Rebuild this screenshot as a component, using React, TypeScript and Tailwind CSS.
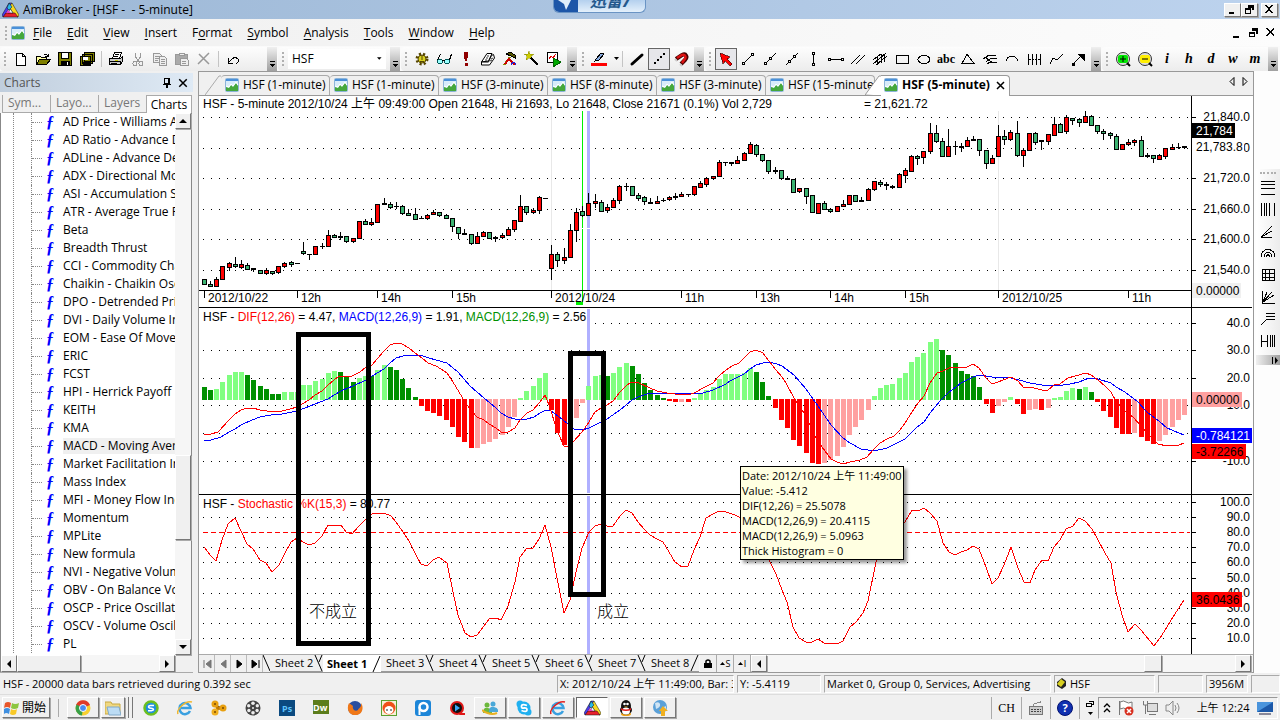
import type { ReactNode } from 'react';

// high, body top, body bottom, low, direction (1 = up, 0 = down)
type Candle = [number, number, number, number, number];

const CANDLES: Candle[] = [
  [279, 279, 285, 285, 0], [281, 284, 287, 287, 0], [277, 279, 287, 287, 1], [266, 266, 280, 280, 1], [262, 263, 268, 271, 1],
  [257, 264, 267, 268, 0], [260, 264, 268, 269, 1], [263, 265, 270, 270, 0], [268, 268, 270, 272, 0], [270, 270, 274, 274, 0],
  [268, 270, 274, 275, 1], [271, 271, 274, 275, 0], [266, 266, 273, 274, 1], [262, 263, 267, 268, 1], [261, 262, 265, 267, 0],
  [263, 263, 264, 264, 0], [242, 251, 254, 255, 0], [254, 254, 255, 260, 0], [246, 246, 255, 255, 1], [243, 246, 247, 249, 0],
  [230, 235, 247, 247, 1], [234, 235, 238, 238, 0], [232, 236, 238, 240, 0], [236, 236, 242, 243, 0], [238, 238, 242, 243, 1],
  [221, 221, 239, 239, 1], [219, 221, 225, 225, 0], [218, 222, 225, 226, 1], [204, 204, 223, 223, 1], [198, 203, 205, 205, 0],
  [202, 204, 208, 209, 0], [202, 206, 207, 209, 0], [205, 206, 214, 215, 0], [209, 213, 216, 216, 0], [208, 214, 220, 220, 0],
  [216, 218, 219, 219, 0], [214, 215, 219, 220, 1], [210, 212, 215, 215, 1], [212, 212, 216, 217, 0], [214, 215, 219, 219, 0],
  [218, 218, 227, 232, 0], [227, 227, 234, 239, 0], [229, 233, 235, 235, 0], [234, 234, 244, 245, 0], [232, 236, 244, 244, 1],
  [231, 232, 237, 237, 1], [232, 232, 239, 239, 0], [236, 237, 239, 242, 0], [233, 235, 238, 239, 1], [227, 229, 236, 236, 1],
  [220, 220, 230, 232, 1], [195, 206, 222, 222, 1], [206, 206, 213, 215, 0], [208, 210, 213, 214, 1], [196, 197, 211, 214, 1],
  [198, 198, 199, 199, 0], [245, 254, 269, 280, 1], [252, 254, 261, 267, 0], [248, 257, 261, 264, 1], [224, 230, 258, 258, 1],
  [208, 212, 231, 242, 1], [206, 211, 216, 217, 0], [193, 203, 216, 216, 1], [194, 201, 204, 208, 1], [200, 202, 212, 212, 0],
  [204, 207, 211, 213, 1], [198, 200, 208, 208, 1], [185, 186, 201, 204, 1], [183, 186, 187, 191, 0], [186, 186, 196, 196, 0],
  [193, 195, 199, 201, 0], [196, 197, 202, 205, 0], [198, 202, 204, 204, 0], [196, 201, 204, 204, 1], [198, 200, 201, 202, 0],
  [196, 197, 200, 201, 1], [193, 196, 198, 200, 1], [192, 194, 197, 197, 1], [194, 194, 195, 197, 0], [186, 186, 195, 196, 1],
  [181, 183, 188, 188, 1], [177, 178, 185, 187, 1], [176, 176, 179, 180, 1], [160, 162, 177, 177, 1], [162, 162, 163, 166, 0],
  [162, 162, 164, 166, 0], [156, 160, 164, 164, 1], [152, 153, 161, 161, 1], [142, 144, 154, 154, 1], [144, 145, 155, 157, 0],
  [154, 154, 161, 162, 0], [160, 160, 172, 174, 0], [167, 170, 172, 174, 0], [170, 170, 179, 180, 0], [176, 178, 180, 180, 0],
  [179, 179, 193, 193, 0], [188, 188, 192, 193, 1], [188, 188, 197, 204, 0], [195, 195, 213, 213, 0], [203, 203, 214, 214, 1],
  [201, 203, 210, 210, 0], [208, 209, 212, 213, 0], [206, 206, 212, 212, 1], [200, 204, 207, 207, 1], [195, 195, 205, 205, 1],
  [195, 195, 202, 202, 0], [197, 200, 202, 202, 0], [188, 189, 201, 201, 1], [181, 181, 190, 191, 1], [180, 182, 185, 187, 0],
  [182, 184, 186, 190, 0], [185, 186, 188, 189, 0], [173, 174, 188, 188, 1], [168, 170, 176, 183, 1], [155, 156, 172, 172, 1],
  [155, 156, 159, 165, 0], [151, 151, 158, 164, 1], [123, 133, 152, 154, 1], [125, 133, 142, 143, 0], [138, 141, 157, 157, 0],
  [129, 146, 157, 157, 1], [141, 146, 147, 155, 0], [143, 146, 148, 152, 0], [137, 140, 147, 147, 1], [136, 139, 141, 141, 0],
  [139, 139, 151, 156, 0], [150, 150, 164, 169, 0], [155, 158, 164, 164, 1], [125, 136, 157, 157, 1], [130, 136, 140, 145, 0],
  [130, 132, 140, 141, 1], [121, 133, 156, 157, 0], [148, 150, 156, 167, 1], [133, 133, 151, 151, 1], [132, 133, 143, 145, 0],
  [140, 140, 142, 150, 0], [134, 134, 142, 145, 1], [117, 124, 136, 136, 1], [123, 124, 133, 133, 0], [115, 117, 132, 134, 1],
  [118, 118, 121, 125, 0], [118, 119, 123, 127, 0], [111, 116, 123, 123, 1], [115, 116, 126, 126, 0], [125, 125, 132, 134, 0],
  [129, 131, 134, 140, 0], [132, 133, 136, 139, 0], [134, 136, 150, 150, 0], [144, 144, 150, 150, 1], [139, 142, 145, 146, 1],
  [139, 140, 143, 146, 1], [136, 140, 157, 157, 0], [153, 155, 157, 158, 0], [155, 155, 159, 163, 0], [154, 155, 160, 160, 1],
  [148, 148, 157, 159, 1], [144, 147, 150, 150, 1], [143, 147, 148, 149, 0], [146, 146, 148, 149, 0],
];

const HISTOGRAM = [
  387, 390, 389, 382, 375, 372, 372, 375, 380, 386, 389, 394, 394, 392, 392, 392, 385, 385, 381, 379,
  373, 371, 372, 376, 382, 378, 376, 376, 370, 365, 367, 370, 379, 388, 397, 406, 411, 413, 416, 420,
  427, 437, 442, 448, 448, 444, 442, 439, 435, 427, 417, 398, 391, 386, 378, 373, 410, 433, 445, 432,
  418, 403, 386, 376, 375, 376, 373, 367, 363, 366, 374, 383, 390, 395, 398, 401, 402, 402, 402, 398,
  393, 390, 387, 379, 374, 374, 374, 373, 368, 372, 382, 396, 408, 420, 428, 440, 446, 453, 463, 464,
  463, 460, 456, 447, 435, 427, 420, 410, 396, 388, 385, 384, 378, 373, 362, 357, 353, 342, 339, 350,
  355, 363, 371, 374, 376, 387, 404, 413, 406, 402, 397, 404, 414, 410, 409, 410, 408, 398, 397, 391,
  388, 389, 387, 392, 402, 411, 417, 428, 434, 434, 433, 437, 441, 444, 441, 435, 427, 420, 415,
];

// D/L = falling/rising above zero, R/P = falling/rising below zero
const SHADES =
  'DDLLLLLDDDDDDLLLLLLLLLDDDLLDLLDDDDDRRRRRRRRRPPPPPPPLLLLLRRRPPPLLLDLLLDDDDDDRRPRLLLLLLLLLLDDDRRRRRRRR' +
  'PPPPPPPPLLLLLLLLLLLDDDDDDDRRPPLRRPPRPLLLLDLDRRRRRRPRRRPPPPP';

const SHADE_COLORS: Record<string, string> = { D: '#009000', L: '#80ff80', R: '#ff0000', P: '#ffa0a0' };

const DIF =
  '204,434 211,434 218,432 229,420 235,414 241,410 247,408 253,408 260,410 267,411 273,412 282,411 290,409 297,407 302,404 309,400 315,395 322,391 328,385 339,376 352,376 360,372 366,367 372,365 378,358 384,351 390,345 396,343 402,344 409,348 415,353 422,358 428,363 436,366 441,369 447,373 453,382 459,392 465,402 470,409 477,417 484,420 489,424 496,428 501,432 508,432 515,428 520,420 527,413 533,410 540,402 545,395 549,405 558,433 564,446 569,446 573,442 582,432 589,422 595,412 601,408 607,405 613,401 620,392 627,385 632,382 639,383 650,388 657,391 667,393 675,394 689,395 696,392 703,388 713,383 719,376 726,370 732,366 739,363 744,358 750,352 756,350 763,353 769,361 776,370 782,377 786,383 794,398 804,413 809,423 816,438 822,447 831,459 837,462 843,464 850,462 860,460 867,457 874,449 880,443 887,439 894,436 900,430 905,423 912,412 918,403 924,396 930,383 937,373 943,371 949,368 955,367 967,367 973,364 979,368 986,378 992,384 998,382 1011,377 1018,381 1024,388 1030,387 1042,390 1048,390 1054,385 1060,384 1068,378 1075,376 1086,373 1091,375 1098,380 1105,386 1111,392 1116,401 1125,411 1133,417 1141,426 1147,433 1153,439 1158,444 1167,446 1174,445 1179,445 1184,443';

const SIGNAL =
  '204,441 211,440 221,437 229,432 235,429 241,425 252,420 260,417 271,415 282,414 297,411 305,408 315,404 328,399 334,395 343,390 353,386 366,380 372,376 384,369 390,363 396,358 403,356 420,355 429,358 436,360 447,363 458,372 470,386 484,398 496,408 501,413 508,417 515,419 527,419 534,417 540,413 546,410 551,411 558,416 568,424 574,429 582,430 589,428 601,422 607,419 620,410 632,400 638,397 650,393 677,393 689,394 703,393 713,390 726,384 730,381 744,374 750,369 756,365 763,363 769,362 777,364 782,366 794,375 806,389 818,406 831,425 843,438 850,443 861,449 874,451 887,448 895,444 905,439 916,428 924,422 930,413 940,401 948,393 961,383 973,377 979,375 986,376 992,377 1011,378 1019,380 1030,383 1042,385 1056,386 1070,384 1079,382 1089,378 1098,379 1111,383 1116,387 1125,392 1137,401 1147,412 1160,422 1167,428 1179,433 1184,435';

const STOCHASTIC =
  '204,547 211,556 216,561 222,540 228,524 235,518 241,531 247,544 253,549 260,560 266,563 272,572 279,565 285,553 291,542 297,538 303,542 309,545 315,543 322,536 328,525 341,525 346,532 352,534 359,526 367,518 372,514 384,513 391,516 396,522 403,532 409,541 416,555 421,564 427,566 433,560 439,557 447,563 453,592 458,615 465,633 471,637 477,635 484,626 489,619 496,618 501,620 508,606 515,582 520,557 527,548 533,548 539,539 545,525 551,547 558,583 564,613 570,600 576,572 582,548 589,532 595,526 601,524 607,526 613,526 620,516 626,510 632,513 638,522 644,529 650,535 657,539 663,542 669,552 675,562 682,567 688,566 694,550 700,537 706,518 713,514 719,511 726,512 735,515 745,520 757,535 769,560 776,574 782,590 787,602 793,627 799,638 806,642 812,642 818,639 824,643 831,643 837,644 843,641 850,627 856,622 863,613 868,601 874,572 877,557 890,535 905,522 912,510 918,511 924,508 930,513 937,521 943,543 949,552 955,555 961,552 967,550 973,546 979,549 986,567 992,584 998,578 1004,565 1011,547 1018,568 1024,582 1030,583 1035,570 1042,560 1048,561 1054,547 1060,540 1066,529 1073,526 1079,518 1085,521 1092,529 1098,540 1105,553 1111,563 1116,592 1122,615 1128,632 1135,624 1141,630 1154,646 1160,638 1167,627 1173,617 1184,600';

const GRID_ROWS = [117, 148, 178, 209, 239, 270, 323, 350, 378, 405, 433, 461, 502, 517, 547, 562, 578, 593, 608, 623, 638];

const AXIS_LABELS: [number, string][] = [
  [117, '21,840.0'], [148, '21,780.0'], [178, '21,720.0'], [209, '21,660.0'], [239, '21,600.0'], [270, '21,540.0'],
  [323, '40.0'], [350, '30.0'], [378, '20.0'], [405, '10.0'], [461, '-10.0'],
  [502, '100.0'], [517, '90.0'], [532, '80.0'], [547, '70.0'], [562, '60.0'], [578, '50.0'], [593, '40.0'], [608, '30.0'], [623, '20.0'], [638, '10.0'],
];

const TIME_LABELS: [number, string][] = [
  [204, '2012/10/22'], [297, '12h'], [377, '14h'], [452, '15h'], [551, '2012/10/24'], [681, '11h'],
  [756, '13h'], [830, '14h'], [905, '15h'], [998, '2012/10/25'], [1128, '11h'],
];

const INDICATORS = [
  'AD Price - Williams Accumulation', 'AD Ratio - Advance Decline Ratio', 'ADLine - Advance Decline Line', 'ADX - Directional Movement', 'ASI - Accumulation Swing',
  'ATR - Average True Range', 'Beta', 'Breadth Thrust', 'CCI - Commodity Channel', 'Chaikin - Chaikin Oscillator',
  'DPO - Detrended Price', 'DVI - Daily Volume Index', 'EOM - Ease Of Movement', 'ERIC', 'FCST', 'HPI - Herrick Payoff Index',
  'KEITH', 'KMA', 'MACD - Moving Average', 'Market Facilitation Index', 'Mass Index', 'MFI - Money Flow Index', 'Momentum',
  'MPLite', 'New formula', 'NVI - Negative Volume', 'OBV - On Balance Volume', 'OSCP - Price Oscillator', 'OSCV - Volume Oscillator', 'PL',
];

const MENU = ['File', 'Edit', 'View', 'Insert', 'Format', 'Symbol', 'Analysis', 'Tools', 'Window', 'Help'];
const MENU_KEY: Record<string, number> = { Format: 1 };

const barX = (i: number) => Math.floor(204.2 + i * 6.205);

const raised = 'border border-white border-r-[#777] border-b-[#777] bg-[#f0f0f0] shadow-[1px_1px_0_#aaa]';
const track = 'bg-[#f6f6f6]';

function Icon({ children, size = 16 }: { children: ReactNode; size?: number }) {
  return (
    <svg width={size} height={size} viewBox="0 0 16 16" fill="none" stroke="#000" shapeRendering="crispEdges" className="shrink-0">
      {children}
    </svg>
  );
}

function Arrow({ dir }: { dir: 'up' | 'down' | 'left' | 'right' }) {
  const d = { up: 'M0 6h8L4 2z', down: 'M0 2h8L4 6z', left: 'M6 0v8L2 4z', right: 'M2 0v8l4-4z' }[dir];
  return (
    <svg width="8" height="8" viewBox="0 0 8 8">
      <path d={d} fill="#000" />
    </svg>
  );
}

function AmiLogo() {
  return (
    <svg width="17" height="16" viewBox="0 0 17 16" stroke="#111" strokeWidth="0.5" strokeLinejoin="round">
      <path d="M7 1h3L3.500 12 1 15 0 13z" fill="#4a3cf0" />
      <path d="M10 1l7 12-1 2-3-1-6-9z" fill="#f8d820" />
      <path d="M1 15l3-4h9l3 4z" fill="#e8202c" />
      <path d="M8.500 7l2.500 4H6z" fill="#e8ffff" />
      <path d="M7 1l3 4-3 3-2-2z" fill="#28b8e8" />
      <path d="M4 11l2-3 3 3z" fill="#e040c0" stroke="none" />
    </svg>
  );
}

function ChartIcon() {
  return (
    <svg width="14" height="14" viewBox="0 0 14 14" className="shrink-0">
      <rect x=".5" y=".5" width="13" height="13" rx="1" fill="#d8ecfa" stroke="#8db4d8" />
      <rect x="1" y="1" width="12" height="2" fill="#4a90d9" />
      <path d="M1 13V9l3 1 2-3 2 2 3-4 2 3v5z" fill="#45a83c" />
      <path d="M1 8l3 1 2-3 2 2 3-4 2 3" fill="none" stroke="#fff" />
    </svg>
  );
}

function Tool({ label, children, pressed = false }: { label: string; children: ReactNode; pressed?: boolean }) {
  return (
    <button
      type="button"
      aria-label={label}
      className={
        pressed
          ? 'flex h-[22px] w-[22px] items-center justify-center border border-[#666] bg-[#e6e6ea]'
          : 'flex h-[22px] w-[22px] items-center justify-center'
      }
    >
      {children}
    </button>
  );
}

function ToolGroup({ children, className = '' }: { children: ReactNode; className?: string }) {
  return (
    <div className={`flex h-6 items-center gap-[2px] rounded-sm bg-gradient-to-b from-[#fdfdfd] to-[#ececec] ${className}`}>
      <span className="ml-1 h-[14px] w-1 border-l-2 border-dotted border-[#b0b0b0]" />
      <div className="flex flex-1 items-center">{children}</div>
      <button type="button" aria-label="Toolbar options" className="flex h-6 w-[10px] flex-col items-center justify-end bg-gradient-to-b from-[#f0f0f0] to-[#a0a0a0] pb-1">
        <svg width="5" height="6" viewBox="0 0 5 6" shapeRendering="crispEdges">
          <path d="M0 0h5v1H0zM0 3h5L2.500 6z" fill="#000" />
        </svg>
      </button>
    </div>
  );
}

const Sep = () => <span className="mx-[3px] h-4 w-px bg-[#c4c4c4]" />;

function Toolbar() {
  return (
    <div className="flex h-[25px] items-center gap-px overflow-hidden bg-[#fafafa]">
      <ToolGroup className="w-[277px]">
        <Tool label="New"><Icon><path d="M3.500 2.500h6l3 3v9h-9zM9.500 2.500v3h3" fill="#fff" /></Icon></Tool>
        <Tool label="Open"><Icon><path d="M1.500 13.500v-8h4l1 1h5v3" fill="#ffffa0" /><path d="M1.500 13.500l3-5h11l-4 5z" fill="#808000" /><path d="M9 3.500h2l2 1m0-2v3h-3" /></Icon></Tool>
        <Tool label="Save"><Icon><rect x="1.500" y="1.500" width="13" height="13" fill="#808000" /><rect x="4.500" y="1.500" width="7" height="6" fill="#fff" /><rect x="4.500" y="10.500" width="8" height="4" fill="#000" /><path d="M10.500 11v3" stroke="#fff" /></Icon></Tool>
        <Tool label="Save all"><Icon><path d="M5.500 1.500h10v9h-10zM3.500 3.500h10v9h-10zM1.500 5.500h10v9h-10z" fill="#808000" /><path d="M4 6h5v3H4z" fill="#fff" stroke="none" /><path d="M4 11h6v3H4z" fill="#000" /></Icon></Tool>
        <Sep />
        <Tool label="Print"><Icon><path d="M4.500 7.500l2-6h7l-2 6z" fill="#fff" /><path d="M7 3.500h4M6 5.500h4" /><path d="M1.500 7.500h11l2-2v5l-2 3h-11z" fill="#ccc" /><path d="M1.500 10.500h11v3M3 12.500h6" /><path d="M7 9h3" stroke="#cc0" /></Icon></Tool>
        <Tool label="Cut"><Icon><path d="M5.500 2v4l4 5M10.500 2v4l-4 5" stroke="#999" /><circle cx="5" cy="12.500" r="2" stroke="#999" /><circle cx="11" cy="12.500" r="2" stroke="#999" /></Icon></Tool>
        <Tool label="Copy"><Icon><path d="M1.500 2.500h6l2 2v7h-8zM3 5.500h4M3 7.500h4M3 9.500h3" stroke="#999" fill="#eee" /><path d="M7.500 5.500h5l2 2v7h-7zM9 8.500h4M9 10.500h4M9 12.500h4" stroke="#999" fill="#eee" /></Icon></Tool>
        <Tool label="Paste"><Icon><path d="M1.500 3.500h12v10h-12z" fill="#aaa" stroke="#999" /><path d="M5 4.500v-2h5v2z" fill="#eee" stroke="#999" /><path d="M6.500 7.500h6l2 2v5h-8zM8 10.500h4M8 12.500h4" fill="#eee" stroke="#999" /></Icon></Tool>
        <Tool label="Delete"><Icon><path d="M3 3l10 10M13 2L2 13" stroke="#999" strokeWidth="1.500" shapeRendering="auto" /></Icon></Tool>
        <Sep />
        <Tool label="Undo"><Icon><path d="M3 7v5h5M3.500 11.500l4-4c2-1.500 6-1 6 2 0 1.500-1 2.500-2 3" /></Icon></Tool>
      </ToolGroup>
      <ToolGroup className="w-[122px]">
        <label className="flex h-5 w-[98px] items-center bg-white">
          <span className="sr-only">Symbol</span>
          <select className="w-full appearance-none bg-transparent pl-1 outline-none" defaultValue="HSF">
            <option>HSF</option>
          </select>
          <svg width="5" height="3" viewBox="0 0 5 3" className="mr-1"><path d="M0 0h5L2.500 3z" fill="#000" /></svg>
        </label>
      </ToolGroup>
      <ToolGroup>
        <Tool label="Indicator settings">
          <svg width="16" height="16" viewBox="0 0 16 16" fill="none">
            <circle cx="8" cy="8" r="5" strokeDasharray="2 2" strokeWidth="3" stroke="#554400" />
            <circle cx="8" cy="8" r="4" fill="#d8d020" stroke="#554400" />
            <path d="M8 4v5M6 10.500h4" stroke="#554400" />
          </svg>
        </Tool>
        <Tool label="Scan"><Icon><circle cx="4" cy="10.500" r="2.500" fill="#9ff" stroke="#055" /><circle cx="11" cy="10.500" r="2.500" fill="#9ff" stroke="#055" /><path d="M1.500 9l3-6M13.500 9l2-6M6 9.500h3" /></Icon></Tool>
        <Tool label="Explore"><Icon><path d="M6 1h4v4l-1 5H7L6 5zM7 12h3v3H7z" fill="#900000" stroke="none" /></Icon></Tool>
        <Tool label="Formula editor">
          <svg width="16" height="16" viewBox="0 0 16 16" fill="#fff" stroke="#000">
            <path d="M7 2.500h5L8.500 10l-7 1z" />
            <path d="M1.500 11v3h8l5-7-1-3.500-2 1L8.500 11z" />
            <path d="M7 5h2M6 7h2M5 9h2M11 8l2-1M10 10l2-1" strokeWidth=".8" />
          </svg>
        </Tool>
        <Tool label="Tools"><Icon><path d="M4 3l4-2 5 3v3L9 5z" fill="#550" /><path d="M8 6L2 14" strokeWidth="2" stroke="#880" /><path d="M3 13l4-5 6 6" stroke="#c00" strokeWidth="2" /><path d="M9 14c2-4 4-3 5 0" stroke="#22d" /></Icon></Tool>
        <Tool label="Wizard"><Icon><path d="M5 0l1 3h4L7 5l1 4-3-2-3 2 1-4-3-2h4z" fill="#cc0" stroke="#880" strokeWidth=".5" /><path d="M7 7l7 7" strokeWidth="2" /></Icon></Tool>
        <Tool label="Run analysis"><Icon><rect x="1.500" y="1.500" width="10" height="10" fill="#fff" /><path d="M3 8l2-3 2 2 3-4" stroke="#d00" /><path d="M7 7l8 4-8 5z" fill="#0a0" stroke="#060" /></Icon></Tool>
      </ToolGroup>
      <ToolGroup>
        <Tool label="Line colour"><Icon><path d="M5 8l5-6 3 1-5 6-4 1z" fill="#8ad" /><path d="M0 12h16v3H0z" fill="#f00" stroke="none" /></Icon></Tool>
        <svg width="5" height="3" viewBox="0 0 5 3" className="ml-1"><path d="M0 0h5L2.500 3z" fill="#000" /></svg>
        <Sep />
        <Tool label="Thick line"><Icon><path d="M3 13L13 4" strokeWidth="3" strokeLinecap="round" shapeRendering="auto" /></Icon></Tool>
        <Tool label="Dotted line" pressed><Icon><path d="M3 13h2v-2H3zM6 10h2V8H6zM9 7h2V5H9zM12 4h2V2h-2z" fill="#000" stroke="none" /></Icon></Tool>
        <Tool label="Magnet"><svg width="16" height="16" viewBox="0 0 16 16"><path d="M3 8l6-4c4-2 6 2 3 5l-4 4" fill="none" stroke="#400" strokeWidth="4" /><path d="M4 7l5-3c3-1 5 2 2 5l-2 3" fill="none" stroke="#d11" strokeWidth="2.500" /><path d="M2 8l2 2M7 13l2 2" stroke="#ccc" strokeWidth="2" /></svg></Tool>
      </ToolGroup>
      <ToolGroup>
        <Tool label="Select" pressed><Icon><path d="M2 2l10 4-3 2 5 5-2 2-5-5-2 3z" fill="#f00" stroke="#400" strokeWidth=".7" /></Icon></Tool>
        <Tool label="Trend line"><Icon><path d="M3 13L13 3" /><path d="M2.500 11.500h2v2h-2zM11.500 2.500h2v2h-2z" fill="#fff" /></Icon></Tool>
        <Tool label="Ray"><Icon><path d="M3 13L14 2" /><path d="M2.500 11.500h2v2h-2zM7.500 6.500h2v2h-2z" fill="#fff" /></Icon></Tool>
        <Tool label="Extended line"><Icon><path d="M2 14L14 2" /><path d="M4.500 9.500h2v2h-2zM9.500 4.500h2v2h-2z" fill="#fff" /></Icon></Tool>
        <Tool label="Vertical line"><Icon><path d="M7.500 2v12" /><path d="M6.500 1.500h2v2h-2zM6.500 12.500h2v2h-2z" fill="#fff" /></Icon></Tool>
        <Tool label="Horizontal line"><Icon><path d="M1 8.500h14" /><path d="M.5 7.500h2v2H.5zM13.500 7.500h2v2h-2z" fill="#fff" /></Icon></Tool>
        <Tool label="Parallel lines"><Icon><path d="M1 13L10 4M6 13l9-9" /></Icon></Tool>
        <Tool label="Regression channel"><Icon><path d="M1 13L14 2M4 14L15 5M1 9l8-6M5 5v9M9 3v9M12 3v8" /></Icon></Tool>
        <Tool label="Rectangle"><Icon><rect x="2.500" y="4.500" width="12" height="8" /></Icon></Tool>
        <Tool label="Ellipse"><Icon><ellipse cx="8" cy="8.500" rx="6" ry="4" /></Icon></Tool>
        <Tool label="Text"><span className="font-[family-name:'Liberation_Serif',serif] text-xs font-bold">abc</span></Tool>
        <Tool label="Triangle"><Icon><path d="M2 12.500L7 3l7 9.500z" /></Icon></Tool>
        <Tool label="Pitchfork"><Icon><path d="M1 8L7 4h7M4 11l5-4h6M3 6l8 6M5 13l3-2h7" /></Icon></Tool>
        <Tool label="Arc"><Icon><path d="M2 10c2-6 9-7 12 0" /></Icon></Tool>
        <Tool label="Cycle"><Icon><path d="M2.500 3v11M6.500 3v11M10.500 3v11M14.500 3v11" /><path d="M3 8.500h12" strokeDasharray="2 1" /></Icon></Tool>
        <Tool label="Zig zag"><Icon><path d="M2 13l3-6 4 2 6-6" /></Icon></Tool>
        <Tool label="Arrow"><Icon><path d="M3 13l7-7" /><path d="M8 3h6v6z" fill="#000" /><path d="M2 12h3v3H2z" fill="#000" stroke="none" /></Icon></Tool>
      </ToolGroup>
      <ToolGroup>
        {[['#00e800', 'M5 8h6M8 5v6', 'Zoom in'], ['#ffee00', 'M5 8h6', 'Zoom out']].map(([fill, d, label]) => (
          <Tool key={label} label={label}>
            <svg width="16" height="16" viewBox="0 0 16 16" fill="none" stroke="#000">
              <circle cx="8" cy="8" r="6.500" stroke="#333" fill="#ddd" />
              <rect x="3" y="4" width="10" height="8" rx="2" fill={fill} stroke="none" />
              <path d={d} />
              <path d="M12 12l3 3" strokeWidth="2" />
            </svg>
          </Tool>
        ))}
        {['i', 'h', 'd', 'w', 'm'].map((key) => (
          <Tool key={key} label={`Interval ${key}`}>
            <span className="font-[family-name:'Liberation_Serif',serif] text-sm font-bold italic">{key}</span>
          </Tool>
        ))}
      </ToolGroup>
    </div>
  );
}

function Tree() {
  return (
    <aside className="flex w-[193px] shrink-0 flex-col overflow-hidden border-b border-[#aaa] pt-[2px]">
      <div className="flex h-[19px] items-center justify-between bg-gradient-to-r from-[#c0cedd] to-[#dfeaf5] pr-1 pl-1 text-[#555]">
        <span>Charts</span>
        <span className="flex items-center gap-1">
          <Icon size={12}><path d="M5 2h6v7H5zM9.500 2v7M3 9.500h10M8 10v4" strokeWidth="1.500" /></Icon>
          <Icon size={12}><path d="M3 3l10 10M13 3L3 13" strokeWidth="2" shapeRendering="auto" /></Icon>
        </span>
      </div>
      <div className="mt-[2px] flex h-[19px] items-end pl-[2px] text-[#777]">
        {['Sym...', 'Layo...', 'Layers'].map((tab) => (
          <button key={tab} type="button" className="h-[18px] w-12 border-b border-l border-[#aaa] bg-[#f0f0f0] pb-[2px] pl-[5px] text-left leading-[15px]">
            {tab}
          </button>
        ))}
        <button type="button" className="h-[18px] w-[46px] border-t border-r border-l border-[#aaa] bg-white pb-px leading-[15px] text-black">Charts</button>
      </div>
      <div className="mr-px flex flex-1 border-r border-l border-[#888]">
        <div className="relative min-w-0 flex-1 overflow-hidden bg-white">
          <ul className="ml-3 border-l border-dotted border-[#888]">
            {INDICATORS.map((name) => (
              <li key={name} className="ml-[17px] flex h-[18px] items-center border-l border-dotted border-[#888]">
                <span className="w-[10px] shrink-0 border-t border-dotted border-[#888]" />
                <span className="w-[21px] shrink-0 pl-1 font-[family-name:'Liberation_Serif',serif] text-base leading-4 font-bold text-[#0000ff] italic">ƒ</span>
                <span className={name.startsWith('MACD') ? 'flex-1 bg-[#f0f0f0] whitespace-nowrap' : 'whitespace-nowrap'}>{name}</span>
              </li>
            ))}
          </ul>
        </div>
        <div className={`flex w-4 shrink-0 flex-col ${track}`}>
          <button type="button" aria-label="Scroll up" className={`flex h-4 items-center justify-center ${raised}`}><Arrow dir="up" /></button>
          <div className="flex-[328]" />
          <div className={`flex-[83] ${raised}`} />
          <div className="flex-[100]" />
          <button type="button" aria-label="Scroll down" className={`flex h-4 items-center justify-center ${raised}`}><Arrow dir="down" /></button>
        </div>
      </div>
      <div className={`mr-[18px] flex h-[17px] border-l border-[#888] ${track}`}>
        <button type="button" aria-label="Scroll left" className={`flex w-4 items-center justify-center ${raised}`}><Arrow dir="left" /></button>
        <div className={`w-16 ${raised}`} />
        <div className="flex-1" />
        <button type="button" aria-label="Scroll right" className={`flex w-4 items-center justify-center ${raised}`}><Arrow dir="right" /></button>
      </div>
    </aside>
  );
}

function ValueTag({ y, width, fill, color, text }: { y: number; width: number; fill: string; color: string; text: string }) {
  return (
    <>
      <rect x="1192" y={y} width={width} height="15" fill={fill} />
      <text x="1196" y={y + 12} fill={color}>{text}</text>
    </>
  );
}

function Charts() {
  return (
    <div className="relative">
      <svg
        viewBox="199 96 1054 558"
        shapeRendering="crispEdges"
        className="block h-auto w-full bg-white font-[family-name:'Liberation_Sans','Noto_Sans_CJK_TC',sans-serif] text-xs"
      >
        {GRID_ROWS.map((y) => (
          <path key={y} d={`M203 ${y}.500H1190`} stroke="#000" strokeDasharray="1 7" />
        ))}
        <path d="M200 310h386v15H200zM200 496h193v15H200z" fill="#fff" />
        <path d="M551.500 111V290M998.500 111V290" stroke="#e8e8e8" />
        <path d="M587 111h3v179h-3zM587 309h3v184h-3zM587 496h3v158h-3z" fill="#b0b0ff" />
        <path d="M582.500 111V304" stroke="#00f000" />
        <path d="M576 302h7v3h-7z" fill="#00f000" />
        <path d="M582 228h9v1h-9z" fill="#fff" />

        {CANDLES.map(([high, top, bottom, low, up], i) => (
          <g key={i}>
            <rect x={barX(i)} y={high} width="1" height={low - high} />
            <rect x={barX(i) - 2} y={top} width="5" height={bottom - top} />
            {bottom - top > 2 && (
              <rect x={barX(i) - 1} y={top + 1} width="3" height={bottom - top - 2} fill={up ? '#ff0000' : '#3cb371'} />
            )}
          </g>
        ))}

        {HISTOGRAM.map((y, i) => (
          <rect key={i} x={barX(i) - 2} y={Math.min(y, 399)} width="5" height={y < 399 ? 400 - y : y - 399} fill={SHADE_COLORS[SHADES[i]]} />
        ))}
        <polyline points={SIGNAL} fill="none" stroke="#0000ff" />
        <polyline points={DIF} fill="none" stroke="#ff0000" />
        <path d="M203 532.500H1190" stroke="#ff0000" strokeDasharray="5 3" />
        <polyline points={STOCHASTIC} fill="none" stroke="#ff0000" />

        <path d="M199 290.500H1191M199 307.500H1252M199 494.500H1252M1191.500 96V654" stroke="#000" />
        {TIME_LABELS.map(([x, label]) => (
          <g key={x}>
            <path d={`M${x}.500 291v7`} stroke="#000" />
            <text x={x + 4} y="302">{label}</text>
          </g>
        ))}
        {AXIS_LABELS.map(([y, label]) => (
          <g key={y}>
            <path d={`M1192 ${y}.500h4`} stroke="#000" />
            <text x="1250" y={y + 4} textAnchor="end">{label}</text>
          </g>
        ))}
        <path d="M1192 433.500h4" stroke="#000" />
        <ValueTag y={139} width={52} fill="#ffffff" color="#000" text="21,783.8" />
        <ValueTag y={123} width={43} fill="#000000" color="#fff" text="21,784" />
        <ValueTag y={283} width={49} fill="#f0f0f0" color="#000" text="0.00000" />
        <ValueTag y={392} width={50} fill="#ffa0a0" color="#000" text="0.00000" />
        <ValueTag y={428} width={60} fill="#0000ff" color="#fff" text="-0.784121" />
        <ValueTag y={444} width={54} fill="#ff0000" color="#000" text="-3.72266" />
        <ValueTag y={592} width={50} fill="#ff0000" color="#000" text="36.0436" />

        <text x="203" y="108">HSF - 5-minute 2012/10/24 上午 09:49:00 Open 21648, Hi 21693, Lo 21648, Close 21671 (0.1%) Vol 2,729</text>
        <text x="864" y="108">= 21,621.72</text>
        <text x="203" y="321">
          HSF - <tspan fill="#ff0000">DIF(12,26)</tspan> = 4.47, <tspan fill="#0000ff">MACD(12,26,9)</tspan> = 1.91,{' '}
          <tspan fill="#009000">MACD(12,26,9)</tspan> = 2.56
        </text>
        <text x="203" y="508">
          HSF - <tspan fill="#ff0000">Stochastic %K(15,3)</tspan> = 80.77
        </text>

        <rect x="298.500" y="334.500" width="70" height="309" fill="none" stroke="#000" strokeWidth="5" />
        <rect x="570.500" y="353.500" width="33" height="241" fill="none" stroke="#000" strokeWidth="5" />
        <text x="309" y="617" className="text-base font-light">不成立</text>
        <text x="597" y="617" className="text-base font-light">成立</text>
      </svg>
      <div
        role="tooltip"
        className="absolute top-[370px] left-[541px] border border-black bg-[#ffffe1] px-px py-px text-[11px] leading-[15px] whitespace-nowrap shadow-[3px_3px_3px_#0006]"
      >
        <p>Date: 2012/10/24 上午 11:49:00</p>
        <p>Value: -5.412</p>
        <p>DIF(12,26) = 25.5078</p>
        <p>MACD(12,26,9) = 20.4115</p>
        <p>MACD(12,26,9) = 5.0963</p>
        <p>Thick Histogram = 0</p>
      </div>
    </div>
  );
}

function DocumentTabs() {
  return (
    <div className="flex h-6 items-end border-b border-[#999] bg-[#f0f0f0] pl-[6px]">
      <svg width="16" height="20" viewBox="0 0 16 20"><path d="M0 20L14 1h2" fill="none" stroke="#aaa" /></svg>
      {['1', '1', '3', '8', '3', '15'].map((minutes, i) => (
        <button
          key={i}
          type="button"
          className="flex h-5 w-[109px] items-center gap-1 overflow-hidden rounded-t-sm border-t border-r border-[#aaa] pb-px pl-1 whitespace-nowrap"
        >
          <ChartIcon />
          HSF ({minutes}-minute)
        </button>
      ))}
      <svg width="16" height="20" viewBox="0 0 16 20" className="-ml-[10px]"><path d="M0 20L14 1h3v20z" fill="#fff" stroke="#999" /></svg>
      <button type="button" className="-mb-px flex h-[21px] items-center gap-1 rounded-tr-sm border-t border-r border-[#999] bg-white pr-1 pb-[2px] pl-[3px] font-bold whitespace-nowrap">
        <ChartIcon />
        HSF (5-minute)
        <svg width="9" height="9" viewBox="0 0 9 9" className="ml-[2px]"><path d="M1 1l7 7M8 1L1 8" stroke="#000" strokeWidth="1.500" /></svg>
      </button>
      <span className="ml-auto flex h-full items-center gap-[7px] pr-[5px] pb-1">
        <svg width="6" height="9" viewBox="0 0 6 9"><path d="M5 .5v8l-4-4z" fill="none" stroke="#000" /></svg>
        <svg width="6" height="9" viewBox="0 0 6 9"><path d="M1 .5v8l4-4z" fill="none" stroke="#000" /></svg>
      </span>
    </div>
  );
}

function SheetBar() {
  return (
    <div className={`flex h-[18px] border-t border-[#aaa] ${track}`}>
      {['M4 3v8M11 3v8L6 7z', 'M10 3v8L5 7z', 'M5 3v8l5-4z', 'M4 3v8l5-4zM11 3v8'].map((d, i) => (
        <button key={d} type="button" aria-label={['First', 'Previous', 'Next', 'Last'][i]} className="flex w-4 items-center justify-center border-r border-[#bbb] bg-[#f0f0f0]">
          <svg width="14" height="14" viewBox="0 0 14 14"><path d={d} fill={i < 2 ? '#777' : '#000'} stroke={i < 2 ? '#777' : '#000'} /></svg>
        </button>
      ))}
      <svg width="7" height="17" viewBox="0 0 7 17" className="bg-[#f0f0f0]"><path d="M0 0l7 16" stroke="#000" /></svg>
      {[2, 1, 3, 4, 5, 6, 7, 8].map((n) => (
        <button
          key={n}
          type="button"
          className={
            n === 1
              ? 'flex w-[58px] items-center justify-between bg-white pl-1 text-[11px] leading-[14px] font-bold whitespace-nowrap'
              : 'flex w-[53px] items-center justify-between border-b border-[#999] bg-[#f0f0f0] pl-[5px] text-[11px] leading-[14px] whitespace-nowrap'
          }
        >
          Sheet {n}
          <svg width="9" height="16" viewBox="0 0 9 16" className="shrink-0">
            <path d={n === 1 || n === 8 ? 'M8 0L1 16' : 'M1 0l7 16M8 0L5 7'} stroke="#000" fill="none" />
          </svg>
        </button>
      ))}
      <button type="button" aria-label="Lock" className="ml-px flex w-[17px] items-center justify-center border-r border-[#aaa] bg-[#f0f0f0]">
        <svg width="8" height="10" viewBox="0 0 8 10"><path d="M0 4h8v5H0z" fill="#000" /><path d="M2 4V2q2-2 4 0v2" fill="none" stroke="#000" strokeWidth="1.500" /></svg>
      </button>
      {['S', 'I'].map((key) => (
        <button key={key} type="button" className="flex w-[17px] items-center justify-center border-r border-[#aaa] bg-[#f0f0f0] text-[9px]">
          <svg width="5" height="3" viewBox="0 0 5 3" className="mr-px"><path d="M0 3h5L2.500 0z" fill="#000" /></svg>
          {key}
        </button>
      ))}
      <button type="button" aria-label="Scroll left" className={`flex w-4 items-center justify-center ${raised}`}><Arrow dir="left" /></button>
      <div className="flex-1" />
      <div className={`w-[18px] ${raised}`} />
      <div className="w-[73px]" />
      <button type="button" aria-label="Scroll right" className={`mr-[2px] flex w-4 items-center justify-center ${raised}`}><Arrow dir="right" /></button>
    </div>
  );
}

const SIDE_TOOLS: [string, string][] = [
  ['Fibonacci retracement', 'M1 2.500h14M1 5.500h14M1 9.500h14M1 15.500h14'],
  ['Fibonacci time zones', 'M1.500 2v13M4.500 2v13M6.500 2v13M9.500 2v13M14.500 2v13'],
  ['Fibonacci fan', 'M1 14L12 3M1 14L12 8M1 14h11'],
  ['Fibonacci arcs', 'M1 12c0-10 14-10 14 0M4 12c0-6 8-6 8 0M6.500 12c0-3 3-3 3 0'],
  ['Gann square', 'M2.500 2.500h12v11h-12zM2 6.500h12M2 10.500h12M5.500 2v11M9.500 2v11'],
  ['Gann fan', 'M2.500 2v12h12M3 13L7 3M3 13L12 3M3 13L14 6'],
  ['Fibonacci extension', 'M1 14l5-5M6 8.500h9M6 5.500h9M6 2.500h9'],
  ['Time extension', 'M1.500 2v12M1 8.500h6M7.500 2v12M10.500 2v12M12.500 2v12M14.500 2v12'],
];

function SideToolbar() {
  return (
    <div className="w-[26px] shrink-0 bg-[#fdfdfd] pt-[98px]">
      <div className="ml-[2px] flex flex-col items-center bg-gradient-to-r from-white to-[#ececec]">
        <span className="mt-[3px] h-1 w-4 border-t-2 border-dotted border-[#b0b0b0]" />
        {SIDE_TOOLS.map(([label, d]) => (
          <Tool key={label} label={label}><Icon><path d={d} /></Icon></Tool>
        ))}
        <button type="button" aria-label="Toolbar options" className="mt-[3px] flex h-[10px] w-full items-center justify-end bg-gradient-to-r from-[#f0f0f0] to-[#a0a0a0] pr-[2px]">
          <svg width="6" height="7" viewBox="0 0 6 7"><path d="M0 0h1v7H0zM3 0v7l3-3.500z" fill="#000" /></svg>
        </button>
      </div>
    </div>
  );
}

function StatusBar() {
  const cell = 'h-[18px] overflow-hidden whitespace-nowrap border border-[#aaa] border-r-white border-b-white px-[2px]';
  return (
    <footer className="flex h-[22px] items-center gap-[3px] border-b border-[#ddd] bg-[#f0f0f0] text-[11px] leading-4">
      <span className="min-w-0 flex-1 truncate pl-[3px]">HSF - 20000 data bars retrieved during 0.392 sec</span>
      <span className="flex shrink-0 gap-[3px]">
        <span className={`w-[177px] ${cell}`}>X: 2012/10/24 上午 11:49:00, Bar: 3</span>
        <span className={`w-[84px] ${cell}`}>Y: -5.4119</span>
        <span className={`w-[227px] ${cell}`}>Market 0, Group 0, Services, Advertising</span>
        <span className={`flex w-[101px] items-center gap-1 ${cell}`}>
          <svg width="9" height="11" viewBox="0 0 9 11"><path d="M5 0l4 3v5l-4 3-5-3V4z" fill="#222" /><path d="M4 1l4 3-4 5-4-3z" fill="#d8d020" /></svg>
          HSF
        </span>
        <span className={`w-[45px] ${cell}`} />
        <span className={`w-[42px] ${cell}`}>3956M</span>
        <span className={`w-[29px] ${cell}`} />
      </span>
    </footer>
  );
}

function Glyph({ children }: { children: ReactNode }) {
  return <svg width="16" height="16" viewBox="0 0 16 16" className="shrink-0">{children}</svg>;
}

const Flag = () => (
  <Glyph>
    <path d="M1 3q3-2 6 0l-1 5Q3 6 0 8z" fill="#e8562a" />
    <path d="M8 3q3 2 7 0l-1 5q-4 2-7 0z" fill="#8cc63f" />
    <path d="M0 9q3-2 6 0l-1 5q-3-2-5 0z" fill="#3f8fe0" />
    <path d="M7 9q3 2 6 0l-1 5q-3 2-6 0z" fill="#f8c928" />
  </Glyph>
);

const Ie = ({ red = false }: { red?: boolean }) => (
  <Glyph>
    <path d="M13 11a5.500 5.500 0 1 1 .5-3H4" fill="none" stroke="#3aa0e0" strokeWidth="2.500" />
    <path d="M1 14C-1 10 8 0 15 2" fill="none" stroke={red ? '#e02020' : '#f0b830'} strokeWidth="1.500" />
  </Glyph>
);

const LAUNCHERS: [string, ReactNode][] = [
  ['Sogou', <><circle cx="8" cy="8" r="6.500" fill="#1f8fe0" stroke="#6cbf20" strokeWidth="2.500" /><path d="M11 5.500H7.500q-2 0-2 1.200T8 8.200t2.500 1.300-2 1.200H5" fill="none" stroke="#fff" strokeWidth="1.500" /></>],
  ['Internet Explorer', null],
  ['Molecules', <><path d="M4 4l3 4 6 1M7 8l-3 5" stroke="#c07800" strokeWidth="3" /><circle cx="4" cy="4" r="3.500" fill="#e8a010" /><circle cx="12" cy="8" r="3.500" fill="#e8a010" /><circle cx="4" cy="12" r="3.500" fill="#f0b020" /><g fill="#7a4800"><circle cx="4" cy="4" r="1" /><circle cx="12" cy="8" r="1" /><circle cx="4" cy="12" r="1" /></g></>],
  ['Media player', <><circle cx="8" cy="8" r="7.500" fill="#444" /><g fill="#eee"><circle cx="8" cy="3.300" r="1.800" /><circle cx="8" cy="12.700" r="1.800" /><circle cx="3.700" cy="5.700" r="1.700" /><circle cx="12.300" cy="5.700" r="1.700" /><circle cx="3.900" cy="10.500" r="1.700" /><circle cx="12.100" cy="10.500" r="1.700" /><circle cx="8" cy="8" r="1" /></g></>],
  ['Photoshop', <><rect width="16" height="16" fill="#0b4a80" /><text x="3" y="12" className="text-[9px] font-bold" fill="#5cc4ff">Ps</text></>],
  ['Dreamweaver', <><rect width="16" height="14" fill="#5b7d1c" /><text x="0" y="11" className="text-[9px] font-bold" fill="#fff">Dw</text></>],
  ['Firefox', <><circle cx="8" cy="8" r="7" fill="#2a4fa0" /><path d="M2 3c-3 6 0 12 6 12 8 0 9-8 6-12 1 5-3 5-3 7-3 2-6-1-5-4z" fill="#f07818" /></>],
  ['Photo viewer', <><rect width="16" height="16" fill="#5aa030" /><rect x="1" y="1" width="14" height="14" fill="#f8f0d8" /><circle cx="8" cy="8" r="6.500" fill="#f05018" /><ellipse cx="8" cy="10" rx="4.500" ry="4" fill="#fff" /><path d="M6 9v2M10 9v2" stroke="#222" /></>],
  ['PPS', <><rect width="16" height="16" rx="3" fill="#1d86d8" /><circle cx="8.500" cy="7" r="4" fill="none" stroke="#fff" strokeWidth="2.500" /><path d="M4.500 7v8" stroke="#fff" strokeWidth="2" /></>],
  ['Video player', <><circle cx="8" cy="8" r="7" fill="#e01818" /><circle cx="8" cy="8" r="5" fill="#111" /><path d="M6 4.500v7l5-3.500z" fill="#38a8f8" /><path d="M11 13h5v2h-6z" fill="#e01818" /></>],
];

const WINDOWS: [string, ReactNode][] = [
  ['Messenger', <><circle cx="5" cy="5" r="2.500" fill="#6cb83c" /><path d="M1 13q0-6 5-5t4 5z" fill="#6cb83c" /><circle cx="11" cy="4" r="2.500" fill="#4aa8d8" /><path d="M7 12q0-6 5-5t4 5z" fill="#4aa8d8" /><path d="M0 10q8 6 15 3" stroke="#e8b020" strokeWidth="2" fill="none" /></>],
  ['Skype', <><circle cx="8" cy="8" r="6.500" fill="#1fb0f0" /><circle cx="4" cy="4" r="3.500" fill="#1fb0f0" /><circle cx="12" cy="12" r="3.500" fill="#1fb0f0" /><path d="M11 5.500q-5-2-5.500.5T8 8t3 2-5.500.500" fill="none" stroke="#fff" strokeWidth="1.800" /></>],
  ['Browser', null],
  ['AmiBroker', null],
  ['QQ', <><ellipse cx="8" cy="14" rx="5" ry="2" fill="#f0a010" /><ellipse cx="8" cy="6" rx="5" ry="6" fill="#111" /><ellipse cx="8" cy="10" rx="6" ry="4.500" fill="#111" /><ellipse cx="8" cy="11" rx="4" ry="3.500" fill="#fff" /><path d="M3 8q5 3 10 0v2q-5 2-10 0z" fill="#e01818" /><circle cx="6.500" cy="4" r="1.300" fill="#fff" /><circle cx="9.500" cy="4" r="1.300" fill="#fff" /><path d="M6 6.500h4l-2 1z" fill="#f0a010" /></>],
  ['Updater', <><circle cx="8" cy="7" r="7" fill="#5aa0d8" /><path d="M3 3q4-2 5 1T4 9zM10 8l4-2v4z" fill="#cfe4f4" /><path d="M11 6l5 5h-3v5H9v-5H7z" fill="#f0b020" /></>],
];

function Taskbar() {
  const divider = <span className="h-[22px] w-px bg-[#aaa]" />;
  return (
    <nav className="flex h-[25px] items-center bg-[#f0f0f0] text-black">
      <button type="button" className={`ml-[2px] flex h-[21px] w-12 items-center gap-[2px] pl-px ${raised}`}><Flag />開始</button>
      <span className="ml-2 h-[18px] w-px bg-[#aaa]" />
      <button type="button" aria-label="Chrome" className={`ml-2 flex h-[21px] w-8 items-center justify-center ${raised}`}>
        <Glyph>
          <circle cx="8" cy="8" r="7.500" fill="#f8d030" />
          <path d="M8 8L1 5a7.500 7.500 0 0 1 14 0z" fill="#e03a28" />
          <path d="M8 8L1.500 4.500a7.500 7.500 0 0 0 5.500 11z" fill="#38a048" />
          <circle cx="8" cy="8" r="3.500" fill="#4a8cf0" stroke="#fff" />
        </Glyph>
      </button>
      <button type="button" aria-label="Explorer" className={`ml-[2px] flex h-[21px] w-6 items-center justify-center ${raised}`}>
        <Glyph><path d="M0 2h6l1 2h8v10H0z" fill="#f0d880" stroke="#c8a840" /><path d="M2 7h12l2 8H4z" fill="#bcdcf4" stroke="#80a8c8" /></Glyph>
      </button>
      <span className="h-[21px] w-1 border-r border-[#777]" />
      <span className="h-[21px] w-1 border-r border-[#777]" />
      <div className="ml-px flex">
        {LAUNCHERS.map(([name, art]) => (
          <button key={name} type="button" aria-label={name} className="flex w-[34px] items-center justify-center">
            {art ? <Glyph>{art}</Glyph> : <Ie />}
          </button>
        ))}
      </div>
      <div className="flex gap-[2px]">
        {WINDOWS.map(([name, art]) => (
          <button
            key={name}
            type="button"
            aria-label={name}
            className={
              name === 'AmiBroker'
                ? 'flex h-[21px] w-8 items-center justify-center border border-[#666] border-r-white border-b-white bg-white'
                : `flex h-[21px] w-8 items-center justify-center ${raised}`
            }
          >
            {name === 'AmiBroker' ? <AmiLogo /> : art ? <Glyph>{art}</Glyph> : <Ie red />}
          </button>
        ))}
      </div>
      <div className="ml-auto flex items-center gap-[6px]">
        {divider}
        <span className="font-[family-name:'Liberation_Serif',serif]">CH</span>
        {divider}
        <Icon><path d="M1.500 6.500h13v8h-13z" fill="#ccc" stroke="#777" /><path d="M3 9.500h10M3 11.500h10" strokeDasharray="2 1" stroke="#444" /><path d="M5 6q0-3 4-3t4-2" stroke="#888" /></Icon>
        {divider}
        <Glyph><circle cx="8" cy="8" r="7.500" fill="#1030b0" stroke="#001070" /><text x="8" y="12" textAnchor="middle" className="text-[11px] font-bold" fill="#fff">?</text></Glyph>
        {divider}
        <span className="flex w-2 flex-col items-center gap-1">
          <svg width="8" height="7" viewBox="0 0 8 7" fill="none" stroke="#000" shapeRendering="crispEdges"><path d="M2.500 .5h5v3h-2M.5 2.500h5v3h-5z" /></svg>
          <svg width="5" height="3" viewBox="0 0 5 3"><path d="M0 0h5L2.500 3z" /></svg>
        </span>
      </div>
      <div className="mr-[2px] ml-1 flex h-[22px] w-[180px] items-center justify-between border border-[#999] border-r-white border-b-white px-1">
        <svg width="8" height="10" viewBox="0 0 8 10" fill="none" stroke="#000"><path d="M1 4l3-3 3 3M1 9l3-3 3 3" strokeWidth="1.300" /></svg>
        <Glyph><path d="M1.500 1v14M2 2q4-2 6 0t6 0v7q-4 2-6 0T2 9z" fill="#fff" stroke="#777" /><circle cx="11" cy="11" r="4.500" fill="#d83020" /><path d="M9 9l4 4M13 9l-4 4" stroke="#fff" strokeWidth="1.500" /></Glyph>
        <Glyph><rect x="5.500" y="3.500" width="10" height="8" fill="#ddd" stroke="#777" /><path d="M7 14.500h7M1.500 1v4h4V1M3.500 5v9" fill="none" stroke="#777" /></Glyph>
        <Glyph><path d="M1 5h3l4-4v14l-4-4H1z" fill="#eee" stroke="#888" /><path d="M10 5q2 3 0 6M12 3q4 5 0 10" fill="none" stroke="#888" /></Glyph>
        <span className="pl-2 text-[11px] whitespace-nowrap">上午 12:24</span>
        <Glyph><rect y="2" width="16" height="10" fill="#1c58a8" /><path d="M0 12V2h16z" fill="#4a94dc" /><path d="M2 13h12v2H2z" fill="#889" /></Glyph>
      </div>
    </nav>
  );
}

export default function App() {
  return (
    <div className="flex min-h-screen w-full flex-col overflow-hidden bg-[#f0f0f0] font-[family-name:'Open_Sans','Noto_Sans_CJK_TC',sans-serif] text-xs leading-4 text-black">
      <header className="relative flex h-[19px] items-center gap-1 bg-gradient-to-r from-[#9db8d6] to-[#bdd3ee] px-[2px]">
        <AmiLogo />
        <h1 className="whitespace-pre">AmiBroker - [HSF -  - 5-minute]</h1>
        <div className="absolute top-0 left-1/2 -ml-[87px] flex h-[13px] w-[93px] overflow-hidden rounded-b-md border border-t-0 border-[#6a94c4] bg-gradient-to-b from-[#b4d0ee] to-[#e4f0fb]">
          <span className="flex w-6 justify-center bg-[#1d56a8]">
            <svg width="16" height="12" viewBox="0 0 16 12"><path d="M0 0h13L8 10 6 4z" fill="#dfeefa" /></svg>
          </span>
          <span className="-mt-[9px] pl-3 text-base leading-5 font-bold text-[#24588c] italic">迅雷7</span>
        </div>
        <div className="ml-auto flex">
          {[['Minimize', 'M2 8h5v2H2z'], ['Restore', 'M4 1h6v5H8V4H4zM1 4h6v6H1zM2 6v3h4V6z'], ['Close', 'M1 1h2l2 3 2-3h2L6 5l3 4H7L5 6 3 9H1l3-4z']].map(([label, d]) => (
            <button
              key={label}
              type="button"
              aria-label={label}
              className={`flex h-[14px] w-[17px] items-center justify-center last:ml-[3px] ${raised}`}
            >
              <svg width="11" height="11" viewBox="0 0 11 11" shapeRendering="crispEdges"><path d={d} fillRule="evenodd" /></svg>
            </button>
          ))}
        </div>
      </header>

      <div className="flex h-[27px] items-center bg-gradient-to-r from-[#f0f0f0] to-[#fcfcfc] pl-[5px]">
        <span className="mr-[2px] h-[14px] w-1 border-l-2 border-dotted border-[#b0b0b0]" />
        <ChartIcon />
        <nav className="ml-2 flex gap-[15px]">
          {MENU.map((item) => {
            const k = MENU_KEY[item] ?? 0;
            return (
              <a key={item} href="#">
                {item.slice(0, k)}
                <u className="underline-offset-2">{item[k]}</u>
                {item.slice(k + 1)}
              </a>
            );
          })}
        </nav>
        <div className="ml-auto flex gap-2 pr-[5px]">
          {[['Minimize chart', 'M1 8h6v2H1z'], ['Restore chart', 'M3 0h6v6H7V3H3zM0 4h6v5H0zM1 6v2h4V6z'], ['Close chart', 'M1 0l3 3 3-3h1v1L5 4l3 3v1H7L4 5 1 8H0V7l3-3-3-3V0z']].map(([label, d]) => (
            <button key={label} type="button" aria-label={label}>
              <svg width="9" height="10" viewBox="0 0 9 10" shapeRendering="crispEdges"><path d={d} fillRule="evenodd" /></svg>
            </button>
          ))}
        </div>
      </div>

      <Toolbar />

      <main className="flex">
        <Tree />
        <section className="ml-[5px] min-w-0 flex-1 border border-[#999]">
          <DocumentTabs />
          <Charts />
          <SheetBar />
        </section>
        <SideToolbar />
      </main>

      <StatusBar />
      <Taskbar />
    </div>
  );
}
